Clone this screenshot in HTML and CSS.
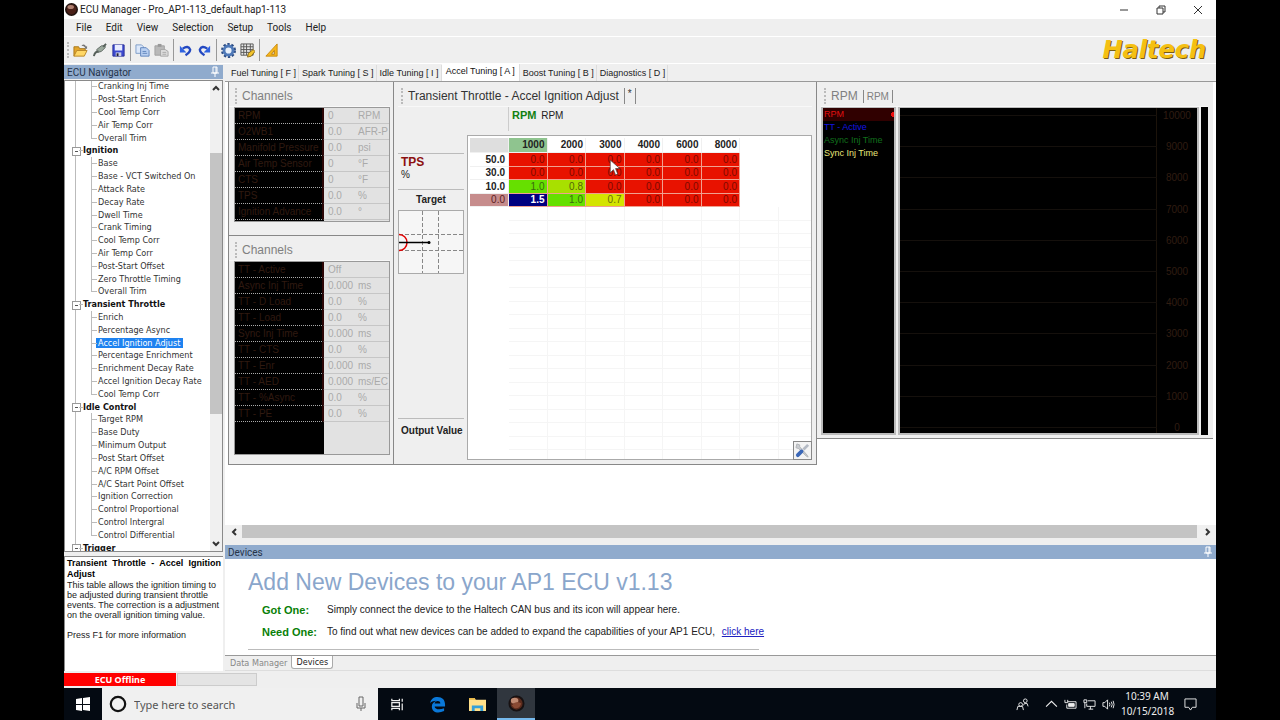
FILE: index.html
```html
<!DOCTYPE html>
<html lang="en">
<head>
<meta charset="utf-8">
<title>ECU Manager</title>
<link rel="stylesheet" href="styles.css">
</head>
<body>
<div class="screen">
  <header class="titlebar">
    <svg class="orb" viewBox="0 0 16 16"><circle cx="8" cy="8" r="7" fill="#4a2018" stroke="#221410" stroke-width="2"/><ellipse cx="7" cy="5" rx="4" ry="2.500" fill="#b08070"/></svg>
    <h1>ECU Manager - Pro_AP1-113_default.hap1-113</h1>
    <div class="winbtns">
      <button aria-label="Minimize"><svg viewBox="0 0 10 10"><path d="M1 5h8"/></svg></button>
      <button aria-label="Restore"><svg viewBox="0 0 10 10"><path d="M1 3h6v6H1zM3 3V1h6v6H7"/></svg></button>
      <button aria-label="Close"><svg viewBox="0 0 10 10"><path d="M1 1l8 8M9 1L1 9"/></svg></button>
    </div>
  </header>
  <nav class="menu">
    <button>File</button><button>Edit</button><button>View</button><button>Selection</button><button>Setup</button><button>Tools</button><button>Help</button>
  </nav>
  <div class="toolbar">
    <i class="grip"></i>
    <button aria-label="Open"><svg viewBox="0 0 16 16"><path d="M1 14V4h5l1 2h6v3" fill="#e3a52a" stroke="#a8761a"/><path d="M1 14l3-6h11l-3 6z" fill="#ffd766" stroke="#b8862a"/><path d="M9 3q3-3 5 1l1-1v3h-3l1-1q-1-2-4-2" fill="#777"/></svg></button>
    <button aria-label="Connect"><svg viewBox="0 0 16 16"><path d="M5 7l5-4 4 0 0 2-4 4-4 1z" fill="#9aa89c" stroke="#626c66"/><path d="M7 9q-4 0-5 5M12 4l3-3" fill="none" stroke="#56605a" stroke-width="2"/></svg></button>
    <button aria-label="Save"><svg viewBox="0 0 16 16"><path d="M2 2h12v12H2z" fill="#3c49cf" stroke="#2a2f96"/><path d="M4 2h8v6H4z" fill="#e8ecff"/><path d="M5 10h6v4H5z" fill="#c9cde8"/><path d="M6 11h2v3H6z" fill="#223"/></svg></button>
    <i class="sep"></i>
    <button aria-label="Copy"><svg viewBox="0 0 16 16"><path d="M1 2h6l2 2v7H1z" fill="#dce8fa" stroke="#7d9cc8"/><path d="M6 5h6l3 3v6H6z" fill="#b9d0f2" stroke="#5e83bb"/><path d="M8 9h4M8 11h5" stroke="#5e83bb"/></svg></button>
    <button aria-label="Paste"><svg viewBox="0 0 16 16"><path d="M1 3h10v10H1z" fill="#b9b9b9" stroke="#a0a0a0"/><path d="M4 1h4v3H4z" fill="#999"/><path d="M7 7h5l3 2v5H7z" fill="#ddd" stroke="#a4a4a4"/><path d="M9 10h4M9 12h4" stroke="#aaa"/></svg></button>
    <i class="sep"></i>
    <button aria-label="Undo"><svg viewBox="0 0 16 16"><path d="M5 6q6-4 8 1 0 3-5 6" fill="none" stroke="#2348c0" stroke-width="2.500"/><path d="M2 3v7h7z" fill="#2f62e0"/></svg></button>
    <button aria-label="Redo"><svg viewBox="0 0 16 16"><path d="M11 6q-6-4-8 1 0 3 5 6" fill="none" stroke="#2348c0" stroke-width="2.500"/><path d="M14 3v7H7z" fill="#2f62e0"/></svg></button>
    <i class="sep"></i>
    <button aria-label="Settings"><svg viewBox="0 0 16 16"><circle cx="8" cy="8" r="6.500" fill="none" stroke="#2c4c84" stroke-width="3" stroke-dasharray="2.400 1.700"/><circle cx="8" cy="8" r="4.800" fill="#e8f0fa" stroke="#4f79b8" stroke-width="3"/></svg></button>
    <button aria-label="Table"><svg viewBox="0 0 16 16"><path d="M1 1h13v12H1z" fill="#e9e9e9"/><path d="M1 1h13v12H1zM4 1v12M7 1v12M11 1v12M1 4h13M1 7h13M1 10h13" fill="none" stroke="#555"/><path d="M8 15l1-4 5-4 2 2-4 5z" fill="#f3c52f" stroke="#8a6a1a"/></svg></button>
    <i class="sep"></i>
    <button aria-label="Calibrate"><svg viewBox="0 0 16 16"><path d="M2 14L14 1v13z" fill="#f7b61a" stroke="#c98a10"/><path d="M8 12l3-4v4z" fill="#efefef" stroke="#b87d10"/></svg></button>
    <span class="logo">Haltech</span>
  </div>

  <main class="main">
    <aside class="side">
      <h2 class="bar">ECU Navigator <svg class="pin" viewBox="0 0 10 12"><path d="M3 1h4v6H3zM1 7h8M5 7v4M6 1v6"/></svg></h2>
      <div class="treebox">
        <ul class="tree">
          <li>Cranking Inj Time</li><li>Post-Start Enrich</li><li>Cool Temp Corr</li><li>Air Temp Corr</li><li class="last">Overall Trim</li>
          <li class="group">Ignition</li>
          <li>Base</li><li>Base - VCT Switched On</li><li>Attack Rate</li><li>Decay Rate</li><li>Dwell Time</li><li>Crank Timing</li><li>Cool Temp Corr</li><li>Air Temp Corr</li><li>Post-Start Offset</li><li>Zero Throttle Timing</li><li class="last">Overall Trim</li>
          <li class="group">Transient Throttle</li>
          <li>Enrich</li><li>Percentage Async</li><li><span class="sel">Accel Ignition Adjust</span></li><li>Percentage Enrichment</li><li>Enrichment Decay Rate</li><li>Accel Ignition Decay Rate</li><li class="last">Cool Temp Corr</li>
          <li class="group">Idle Control</li>
          <li>Target RPM</li><li>Base Duty</li><li>Minimum Output</li><li>Post Start Offset</li><li>A/C RPM Offset</li><li>A/C Start Point Offset</li><li>Ignition Correction</li><li>Control Proportional</li><li>Control Intergral</li><li class="last">Control Differential</li>
          <li class="group">Trigger</li>
        </ul>
        <div class="vscroll">
          <button aria-label="Scroll up"><svg viewBox="0 0 8 8"><path d="M1 6l3-3 3 3"/></svg></button>
          <div class="vtrack"><div class="vthumb"></div></div>
          <button aria-label="Scroll down"><svg viewBox="0 0 8 8"><path d="M1 2l3 3 3-3"/></svg></button>
        </div>
      </div>
      <section class="hint">
        <h3>Transient Throttle - Accel Ignition Adjust</h3>
        <p>This table allows the ignition timing to be adjusted during transient throttle events. The correction is a adjustment on the overall ignition timing value.</p>
        <p class="more">Press F1 for more information</p>
      </section>
    </aside>

    <div class="content">
      <div class="tabs">
        <button>Fuel Tuning [ F ]</button><button>Spark Tuning [ S ]</button><button>Idle Tuning [ I ]</button><button class="on">Accel Tuning [ A ]</button><button>Boost Tuning [ B ]</button><button>Diagnostics [ D ]</button>
      </div>
      <div class="work">
        <div class="leftcol">
          <section class="panel chan">
            <h2 class="ptitle dim"><i class="grip"></i>Channels</h2>
            <div class="chanbox">
              <table>
                <tr><th>RPM</th><td>0</td><td>RPM</td></tr>
                <tr><th>O2WB1</th><td>0.0</td><td>AFR-P</td></tr>
                <tr><th>Manifold Pressure</th><td>0.0</td><td>psi</td></tr>
                <tr><th>Air Temp Sensor</th><td>0</td><td>°F</td></tr>
                <tr><th>CTS</th><td>0</td><td>°F</td></tr>
                <tr><th>TPS</th><td>0.0</td><td>%</td></tr>
                <tr><th>Ignition Advance</th><td>0.0</td><td>°</td></tr>
              </table>
            </div>
          </section>
          <section class="panel chan tall">
            <h2 class="ptitle dim"><i class="grip"></i>Channels</h2>
            <div class="chanbox">
              <table>
                <tr><th>TT - Active</th><td>Off</td><td></td></tr>
                <tr><th>Async Inj Time</th><td>0.000</td><td>ms</td></tr>
                <tr><th>TT - D Load</th><td>0.0</td><td>%</td></tr>
                <tr><th>TT - Load</th><td>0.0</td><td>%</td></tr>
                <tr><th>Sync Inj Time</th><td>0.000</td><td>ms</td></tr>
                <tr><th>TT - CTS</th><td>0.0</td><td>%</td></tr>
                <tr><th>TT - Enr</th><td>0.000</td><td>ms</td></tr>
                <tr><th>TT - AED</th><td>0.000</td><td>ms/EC</td></tr>
                <tr><th>TT - %Async</th><td>0.0</td><td>%</td></tr>
                <tr><th>TT - PE</th><td>0.0</td><td>%</td></tr>
              </table>
            </div>
          </section>
        </div>

        <section class="panel map">
          <h2 class="ptitle"><i class="grip"></i>Transient Throttle - Accel Ignition Adjust<span class="mark">*</span></h2>
          <div class="xaxis"><div><b>RPM</b> RPM</div></div>
          <div class="mapbody">
            <div class="yaxis">
              <div class="tps"><b>TPS</b><span>%</span></div>
              <div class="target">Target</div>
              <svg class="scope" viewBox="0 0 66 64"><rect x=".5" y=".5" width="65" height="63" fill="#f6f6f6" stroke="#aaa"/><path d="M24.500 1v62M40.500 1v62M1 24.500h64M1 40.500h64" stroke="#888" stroke-dasharray="4 2" fill="none"/><path d="M1 24.500a8 8 0 0 1 0 16" fill="none" stroke="#e00000" stroke-width="1.500"/><path d="M1 32.500h31" stroke="#000" stroke-width="1.500"/><circle cx="31" cy="32.500" r="1.500" fill="#000"/></svg>
              <div class="output">Output Value</div>
            </div>
            <div class="sheet">
              <table>
                <thead><tr><th class="corner"></th><th class="cur">1000</th><th>2000</th><th>3000</th><th>4000</th><th>6000</th><th>8000</th></tr></thead>
                <tbody>
                  <tr><th>50.0</th><td>0.0</td><td>0.0</td><td>0.0</td><td>0.0</td><td>0.0</td><td>0.0</td></tr>
                  <tr><th>30.0</th><td>0.0</td><td>0.0</td><td>0.0</td><td>0.0</td><td>0.0</td><td>0.0</td></tr>
                  <tr><th>10.0</th><td class="g1">1.0</td><td class="g2">0.8</td><td>0.0</td><td>0.0</td><td>0.0</td><td>0.0</td></tr>
                  <tr><th class="cur">0.0</th><td class="active">1.5</td><td class="g1">1.0</td><td class="g3">0.7</td><td>0.0</td><td>0.0</td><td>0.0</td></tr>
                </tbody>
              </table>
              <div class="blank"></div>
              <svg class="cursor" viewBox="0 0 10 16"><path d="M1 1v12l3-3 2 5 2-1-2-5h4z" fill="#fff" stroke="#333" stroke-width=".6"/></svg>
              <button class="tool" aria-label="Options"><svg viewBox="0 0 16 16"><path d="M2 1l3 1 0 2 8 9 1 2-2-1-8-8-3-1z" fill="#c9ccd0" stroke="#b0b3b8"/><path d="M14 2l-5 5" stroke="#b4bac4" stroke-width="3"/><path d="M7 9l-4 4" stroke="#3c68b8" stroke-width="4" stroke-linecap="round"/></svg></button>
            </div>
          </div>
        </section>

        <section class="panel scope-panel">
          <h2 class="ptitle dim"><i class="grip"></i>RPM<span class="mark">RPM</span></h2>
          <div class="logview">
            <ul class="legend"><li class="l1">RPM</li><li class="l2">TT - Active</li><li class="l3">Async Inj Time</li><li class="l4">Sync Inj Time</li></ul>
            <div class="plot">
              <div><i></i><span>10000</span></div><div><i></i><span>9000</span></div><div><i></i><span>8000</span></div><div><i></i><span>7000</span></div><div><i></i><span>6000</span></div><div><i></i><span>5000</span></div><div><i></i><span>4000</span></div><div><i></i><span>3000</span></div><div><i></i><span>2000</span></div><div><i></i><span>1000</span></div><div><i></i><span>0</span></div>
            </div>
            <div class="gauge"></div>
          </div>
        </section>
      </div>
      <div class="hscroll">
        <button aria-label="Scroll left"><svg viewBox="0 0 8 8"><path d="M6 1L3 4l3 3"/></svg></button>
        <div class="hthumb"></div>
        <button aria-label="Scroll right"><svg viewBox="0 0 8 8"><path d="M2 1l3 3-3 3"/></svg></button>
      </div>
      <h2 class="bar devbar">Devices <svg class="pin" viewBox="0 0 10 12"><path d="M3 1h4v6H3zM1 7h8M5 7v4M6 1v6"/></svg></h2>
      <section class="devices">
        <h3>Add New Devices to your AP1 ECU v1.13</h3>
        <dl>
          <dt>Got One:</dt><dd>Simply connect the device to the Haltech CAN bus and its icon will appear here.</dd>
          <dt>Need One:</dt><dd>To find out what new devices can be added to expand the capabilities of your AP1 ECU, <a href="#">click here</a></dd>
        </dl>
      </section>
      <div class="btabs"><button>Data Manager</button><button class="on">Devices</button></div>
    </div>
  </main>

  <div class="status"><span class="offline">ECU Offline</span><span class="progress"></span></div>

  <footer class="taskbar">
    <button class="start" aria-label="Start"><svg viewBox="0 0 14 14"><path d="M0 2l6-1v6H0zM7 1l7-1v7H7zM0 8h6v6l-6-1zM7 8h7v6l-7-1z" fill="#fff"/></svg></button>
    <label class="search"><svg viewBox="0 0 18 18"><circle cx="9" cy="9" r="7.200" fill="none" stroke="#111" stroke-width="2.200"/></svg><input type="text" placeholder="Type here to search" aria-label="Type here to search"><svg class="mic" viewBox="0 0 10 16"><path d="M3 1h4v9H3zM1 7v5h8V7M5 12v3" fill="none" stroke="#666"/></svg></label>
    <div class="apps">
      <button aria-label="Task view"><svg viewBox="0 0 18 18"><path d="M3 3v2h8V3M3 15v-2h8v2M3 7h8v4H3zM14 3v3M14 8v7" fill="none" stroke="#eee" stroke-width="1.300"/></svg></button>
      <button aria-label="Edge"><svg viewBox="0 0 18 18"><path d="M1 8C2 3 5 1 9 1c5 0 8 3 8 8v2H6c0 3 5 4 10 2v3c-7 3-13 1-13-5 0-3 2-5 5-6-4 0-6 1-7 3zM6 8h6c0-4-6-3-6 0z" fill="#0a78d8"/></svg></button>
      <button aria-label="Explorer"><svg viewBox="0 0 18 16"><path d="M0 1h6l1 2h11v12H0z" fill="#ffe08a"/><path d="M0 1h6l1 2H0z" fill="#e8b848"/><path d="M3 15V9h12v6h-3v-3H6v3z" fill="#35a0d8"/></svg></button>
      <button class="running" aria-label="ECU Manager"><svg viewBox="0 0 18 18"><circle cx="9" cy="9" r="7.500" fill="#5a2a1c" stroke="#171112" stroke-width="2"/><ellipse cx="7" cy="6" rx="4" ry="3" fill="#c08a72"/><path d="M4 11q5-6 10-2-2 6-7 5z" fill="#8a4a34"/></svg></button>
    </div>
    <div class="tray">
      <svg class="people" viewBox="0 0 14 14"><path d="M1 13l1-4h5l1 4M8 8l1-2h3l1 3" /><circle cx="5" cy="7" r="2"/><circle cx="10" cy="3" r="2"/></svg>
      <svg viewBox="0 0 12 12"><path d="M1 8l5-5 5 5"/></svg>
      <svg viewBox="0 0 14 12"><path d="M4 3h9v7H3V6" /><path d="M5 5h6v3H5z" fill="#eee"/><path d="M1 1v3h3V1"/></svg>
      <svg viewBox="0 0 14 12"><path d="M5 2h8v6H4V5M6 11h5M8 8v3M1 1h3v3H1zM2 4v6"/></svg>
      <svg viewBox="0 0 14 12"><path d="M1 4h2l3-3v10L3 8H1zM8 4q1 2 0 4M10 3q2 3 0 6M12 2q2 4 0 8"/></svg>
      <div class="clock"><span>10:39 AM</span><span>10/15/2018</span></div>
      <svg class="note" viewBox="0 0 14 14"><path d="M1 1h12v9H9l-2 3-2-3H1z"/></svg>
    </div>
  </footer>
</div>
</body>
</html>
```
FILE: styles.css
```css
* { box-sizing: border-box; }
body { margin: 0; background: #000; color: #222; font: 10px "Liberation Sans", Arial, sans-serif; }
button { font: inherit; color: inherit; background: none; border: 0; padding: 0; margin: 0; }
h1, h2, h3, p, ul, dl, dd { margin: 0; padding: 0; font: inherit; }
ul { list-style: none; }
svg { display: block; fill: none; }

.screen { display: flex; flex-direction: column; min-height: 100vh; margin: 0 64px; background: #efefef; overflow: hidden; }

.titlebar { display: flex; align-items: center; height: 19px; background: #fff; font: 10px Roboto, sans-serif; }
.orb { width: 13px; height: 13px; margin: 0 2px 0 1px; }
.winbtns { display: flex; margin-left: auto; }
.winbtns button { width: 37px; display: flex; justify-content: center; }
.winbtns svg { width: 10px; height: 10px; stroke: #333; }
.menu { display: flex; height: 18px; gap: 14px; padding-left: 12px; border-bottom: 1px solid #fff; font: 10px Roboto, sans-serif; }

.toolbar { display: flex; align-items: center; height: 27px; padding: 0 10px 0 3px; border-bottom: 1px solid #fff; }
.toolbar button { width: 19px; display: flex; justify-content: center; }
.toolbar button svg { width: 15px; height: 15px; }
.grip { width: 2px; height: 16px; border-left: 2px dotted #bbb; }
.toolbar .grip { margin-right: 2px; }
.sep { width: 1px; height: 22px; margin: 0 2px; background: #999; }
.logo { margin-left: auto; font: italic bold 24px "DejaVu Sans", sans-serif; color: #f5c012; text-shadow: 1px 1px 0 #7a5c10; }

.main { display: flex; flex: 1; gap: 2px; min-height: 0; }
.side { display: flex; flex-direction: column; width: 159px; padding-top: 1px; }
.bar { display: flex; align-items: center; justify-content: space-between; height: 14px; padding: 0 3px; background: #90abcd; color: #26344a; font: 10px Roboto, sans-serif; }
.pin { width: 10px; height: 12px; stroke: #fff; }
.treebox { display: flex; height: 472px; margin-top: 1px; background: #fff; border: 1px solid #8a8a8a; overflow: hidden; }
.tree { flex: 1; display: grid; grid-auto-rows: 1fr; height: 474px; margin-top: -1px; background: linear-gradient(#bbb, #bbb) 10px 0 / 1px 100% no-repeat; font: 9px "DejaVu Sans Condensed", "DejaVu Sans", sans-serif; color: #333; white-space: nowrap; }
.tree li { position: relative; display: flex; align-items: center; padding-left: 33px; }
.tree li::before { content: ""; position: absolute; left: 26px; top: 0; bottom: 0; border-left: 1px solid #bbb; }
.tree li::after { content: ""; position: absolute; left: 26px; top: 50%; width: 6px; border-top: 1px solid #bbb; }
.tree .last::before { bottom: 50%; }
.tree .group { padding-left: 18px; font-weight: bold; color: #111; }
.tree .group::before { left: 7px; top: 3px; bottom: auto; width: 7px; height: 7px; border: 1px solid #999; background: #fff linear-gradient(#555, #555) center / 3px 1px no-repeat; }
.tree .group::after { left: 14px; width: 4px; }
.sel { margin-left: -2px; padding: 0 3px 0 2px; background: #1e82f0; color: #fff; }
.vscroll { display: flex; flex-direction: column; width: 12px; background: #f0f0f0; }
.vscroll button { height: 14px; display: flex; justify-content: center; align-items: center; }
.vscroll svg, .hscroll svg { width: 8px; height: 8px; stroke: #333; stroke-width: 2; }
.vtrack { flex: 1; padding-top: 58px; }
.vthumb { height: 68%; background: #c4c4c4; }
.hint { flex: 1; margin-top: 4px; padding: 1px 2px 0 2px; background: #fff; border: solid #8a8a8a; border-width: 1px 0 0 1px; font-size: 9px; line-height: 10px; }
.hint h3 { font-weight: bold; color: #000; text-align: justify; line-height: 11px; }
.hint .more { margin-top: 10px; }

.content { flex: 1; min-width: 0; display: flex; flex-direction: column; }
.tabs { display: flex; align-items: flex-end; height: 18px; padding-left: 3px; border-bottom: 1px solid #999; font-size: 9px; }
.tabs button { height: 16px; padding: 0 2px 0 3px; border-right: 1px solid #ddd; white-space: nowrap; }
.tabs .on { height: 17px; background: #fff; padding: 0 4px 3px; color: #111; }
.work { flex: 1; display: flex; align-items: flex-start; background: #fff; padding: 0 3px; }
.panel { background: #efefef; border: solid #888; border-width: 0 1px 1px 0; }
.leftcol { width: 166px; flex: none; border-left: 1px solid #888; }
.ptitle { display: flex; align-items: center; height: 25px; padding: 4px 0 0 6px; border-bottom: 1px solid #f8f8f8; font-size: 12px; white-space: nowrap; color: #333; }
.ptitle .grip { margin-right: 5px; }
.dim { color: #808080; }
.mark { margin-left: 5px; padding: 1px 4px; border: solid #888; border-width: 0 1px; font-size: 10px; }
.chan { height: 154px; padding-right: 3px; }
.chan.tall { height: 229px; }
.chanbox { height: 115px; margin-left: 5px; border: 1px solid #999; overflow: hidden; background: linear-gradient(#000, #000) 0 0 / 89px 100% no-repeat #e2e2e2; }
.tall .chanbox { height: 194px; }
.chanbox table { width: 100%; table-layout: fixed; border-collapse: separate; border-spacing: 0; white-space: nowrap; }
.chanbox th, .chanbox td { height: 16px; padding: 0 0 0 4px; text-align: left; font-weight: normal; color: #aaa; border-bottom: 1px solid #c6c6c6; }
.chanbox th { width: 89px; padding-left: 3px; color: #301a10; border-right: 2px solid #2c0505; border-bottom: 1px dotted #aaa; }
.chanbox td:nth-child(2) { width: 32px; }
.chanbox td:last-child { padding-left: 2px; }

.map { flex: 1 1 423px; align-self: stretch; max-height: 383px; display: flex; flex-direction: column; padding: 0 4px 4px 4px; }
.map .ptitle { padding-left: 3px; }
.map .mark { height: 16px; padding: 0 3px; }
.xaxis { height: 28px; padding-left: 110px; }
.xaxis div { height: 24px; border-left: 1px solid #ccc; padding: 2px 0 0 3px; }
.xaxis b { color: #128012; margin-right: 2px; font-size: 11px; }
.mapbody { flex: 1; display: flex; gap: 3px; }
.yaxis { display: flex; flex-direction: column; width: 66px; padding-top: 18px; font-weight: bold; }
.tps { display: flex; flex-direction: column; height: 37px; padding: 1px 3px; border: solid #bbb; border-width: 1px 0; font-weight: normal; }
.tps b { color: #8c1010; font-size: 12px; }
.target { height: 20px; line-height: 20px; text-align: center; }
.scope { width: 66px; height: 64px; }
.output { margin-top: auto; height: 42px; padding: 6px 3px; border-top: 1px solid #bbb; white-space: nowrap; }
.sheet { position: relative; flex: 1; display: flex; flex-direction: column; padding: 2px 0 0 2px; background: #fff; border: 1px solid #aaa; }
.sheet table { width: 270px; table-layout: fixed; border-collapse: separate; border-spacing: 0; }
.sheet th, .sheet td { height: 14px; padding: 0 2px 0 0; text-align: right; line-height: 12px; border: solid #f0f0f0; border-width: 0 1px 1px 0; }
.sheet thead th { height: 15px; }
.sheet tbody tr:nth-child(even) > * { height: 13px; }
.sheet td { background: #e81200; color: #7c0a00; border-color: #f0a090; }
.sheet th { color: #222; }
.sheet tr > :first-child { width: 39px; padding-right: 3px; }
.sheet .corner { background: #dedede; }
.sheet thead .cur { background: #8fc48f; }
.sheet tbody .cur { background: #c68c8c; color: #5c2020; font-weight: normal; }
.sheet .g1 { background: #66e000; color: #3a6a10; }
.sheet .g2 { background: #a8e000; color: #55660a; }
.sheet .g3 { background: #d4e400; color: #6a6a10; }
.sheet .active { background: #000080; color: #fff; font-weight: bold; }
.blank { flex: 1; margin-left: 39px; background: repeating-linear-gradient(transparent 0 13px, #f5f5f5 13px 14px, transparent 14px 26px, #f5f5f5 26px 27px), repeating-linear-gradient(90deg, transparent 0 38px, #f5f5f5 38px 39px, transparent 39px 76px, #f5f5f5 76px 77px); }
.cursor { position: absolute; left: 141px; top: 23px; width: 11px; height: 17px; }
.tool { position: absolute; right: -1px; bottom: -1px; width: 19px; height: 19px; padding: 1px; background: #f4f4f4; border: 1px solid #888; }

.scope-panel { flex: 1 1 396px; border-right: 0; padding: 0 5px 3px 4px; }
.scope-panel .ptitle { padding-left: 3px; }
.scope-panel .mark { padding: 1px 3px; }
.logview { display: flex; gap: 2px; height: 328px; }
.legend { width: 75px; background: #000; border: solid #bbb; border-width: 1px 2px 2px; font-size: 9px; line-height: 13px; white-space: nowrap; }
.legend li { padding-left: 1px; }
.l1 { color: #e01010; background: radial-gradient(circle at 100% 50%, #f01010 0 3px, transparent 3px) #300000; }
.l2 { color: #1414e0; }
.l3 { color: #10701c; }
.l4 { color: #e8e87a; }
.plot { flex: 1; display: flex; flex-direction: column; justify-content: space-between; padding-top: 2px; background: linear-gradient(#1c130a, #1c130a) right 40px top 0 / 1px 100% no-repeat #000; border: solid #bbb; border-width: 1px 2px 2px; color: #301d12; line-height: 11px; }
.plot div { display: flex; align-items: center; }
.plot i { flex: 1; border-top: 1px solid #15100c; }
.plot span { width: 40px; text-align: center; }
.gauge { width: 7px; background: #000; }

.hscroll { display: flex; height: 13px; margin-bottom: 7px; background: #f0f0f0; }
.hscroll button { width: 17px; display: flex; justify-content: center; align-items: center; }
.hthumb { flex: 1; margin-right: 2px; background: #c4c4c4; }
.devices { height: 97px; padding: 7px 23px 0; background: #fff; border-bottom: 1px solid #999; }
.devices h3 { font-size: 23px; line-height: 32px; color: #8aa6cb; }
.devices dl { display: grid; grid-template-columns: 65px 1fr; width: 511px; padding: 6px 0 11px 14px; row-gap: 10px; line-height: 12px; border-bottom: 1px solid #bbb; white-space: nowrap; }
.devices dt { font-weight: bold; font-size: 11px; color: #088008; }
.devices a { margin-left: 4px; color: #2020c0; }
.btabs { display: flex; height: 15px; padding-left: 1px; border-bottom: 1px solid #ddd; font: 9px "DejaVu Sans Condensed", sans-serif; }
.btabs button { padding: 0 4px; color: #888; }
.btabs .on { height: 13px; background: #fff; color: #222; border: solid #aaa; border-width: 0 1px 1px; border-radius: 0 0 3px 3px; }

.status { display: flex; gap: 1px; height: 17px; padding-top: 2px; padding-bottom: 2px; }
.offline { width: 112px; background: #f00; color: #fff; font: bold 9px/13px "Noto Sans", sans-serif; text-align: center; }
.progress { width: 80px; background: #e4e4e4; border: 1px solid #ccc; }

.taskbar { display: flex; height: 32px; background: #040a12; color: #eee; font: 11px "Noto Sans", sans-serif; }
.start { width: 38px; display: flex; justify-content: center; align-items: center; }
.start svg { width: 14px; height: 14px; }
.search { display: flex; align-items: center; width: 276px; padding: 0 12px 0 7px; background: #f0f0f0; }
.search svg { width: 18px; height: 18px; }
.search input { flex: 1; min-width: 0; margin: 0; padding: 0 0 0 7px; border: 0; background: none; font: inherit; color: #555; }
.search input::placeholder { color: #555; }
.search .mic { width: 10px; height: 16px; }
.apps { display: flex; }
.apps button { width: 40px; display: flex; justify-content: center; align-items: center; }
.apps button:first-child { width: 39px; }
.apps button svg { width: 17px; height: 17px; }
.apps .running { background: #30363e; border-bottom: 2px solid #76b9ed; width: 38px; }
.tray { display: flex; align-items: center; gap: 6px; margin-left: auto; padding-right: 19px; }
.tray svg { width: 13px; height: 13px; stroke: #eee; }
.tray .people { margin-right: 10px; }
.clock { display: flex; flex-direction: column; width: 52px; margin-right: 5px; font-size: 10px; line-height: 15px; text-align: center; }
```
